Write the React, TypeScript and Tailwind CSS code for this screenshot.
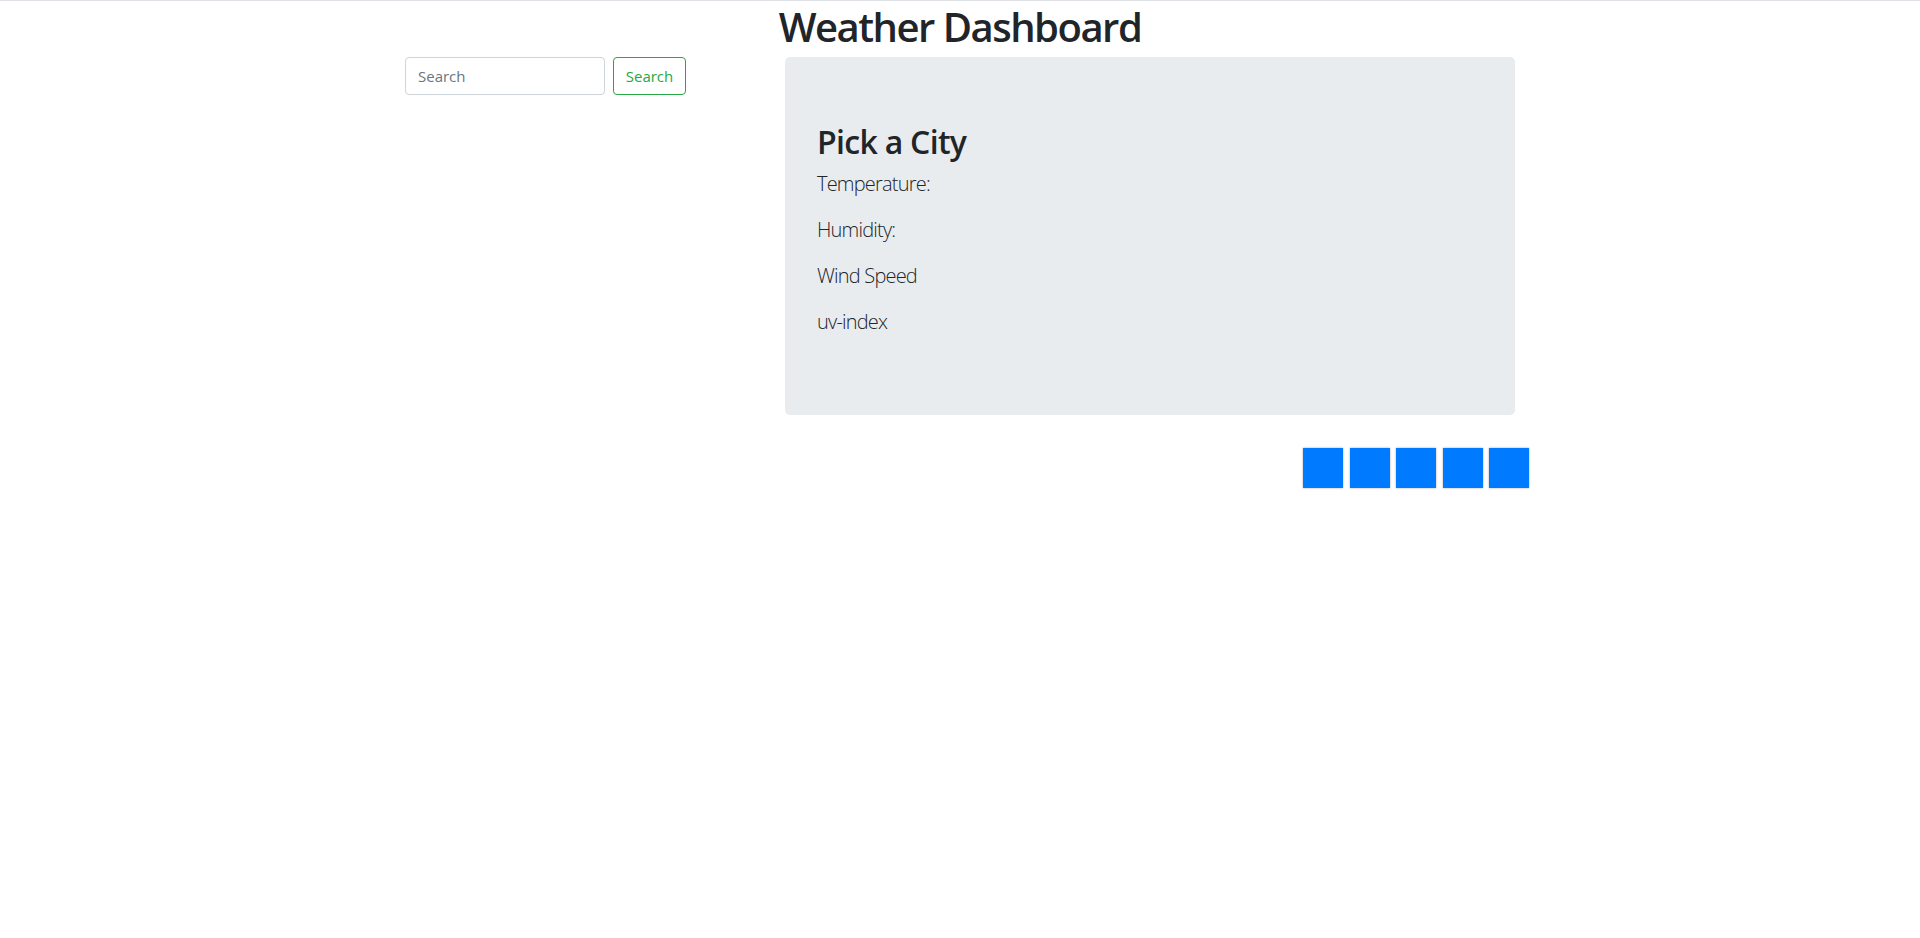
import React from 'react';

const days = [0, 1, 2, 3, 4];

const App = () => {
  return (
    <div
      className="min-h-screen w-full bg-white border-t border-[#dee2e6] text-[#212529]"
      style={{ fontFamily: '"Open Sans", "Noto Sans", sans-serif' }}
    >
      {/* Header */}
      <h1 className="text-center text-[40px] leading-[48px] font-semibold pt-[2px] mb-[6px] tracking-[-1.5px]">Weather Dashboard</h1>

      <div className="w-[1140px] mx-auto flex">
        {/* Search column */}
        <div className="w-[380px] px-[15px]">
          <form className="flex items-center gap-2" onSubmit={(e) => e.preventDefault()}>
            <input
              type="text"
              placeholder="Search"
              className="w-[200px] h-[38px] px-3 text-[15px] border border-[#ced4da] rounded-[4px] bg-white placeholder:text-[#6c757d] outline-none"
            />
            <button
              type="submit"
              className="h-[38px] w-[73px] text-[15px] text-[#28a745] border border-[#28a745] rounded-[4px] bg-white"
            >
              Search
            </button>
          </form>
        </div>

        {/* Current weather */}
        <div className="w-[760px] px-[15px]">
          <div className="bg-[#e9ecef] rounded-[5px] px-8 pt-[66px] pb-[62px]">
            <h2 className="text-[32px] leading-[38px] font-semibold mb-2 tracking-[-0.7px]">Pick a City</h2>
            <p className="text-[20px] leading-[30px] font-light mb-4 tracking-[-0.8px]">Temperature:</p>
            <p className="text-[20px] leading-[30px] font-light mb-4 tracking-[-0.8px]">Humidity:</p>
            <p className="text-[20px] leading-[30px] font-light mb-4 tracking-[-0.8px]">Wind Speed</p>
            <p className="text-[20px] leading-[30px] font-light mb-4 tracking-[-0.8px]">uv-index</p>
          </div>

          {/* Forecast */}
          <div className="flex justify-end gap-[6.5px] mt-[33px] -mr-[14px]">
            {days.map((d) => (
              <div key={d} className="w-10 h-10 bg-[#007bff] shadow-[0_0_2px_rgba(0,0,0,0.35)]" />
            ))}
          </div>
        </div>
      </div>
    </div>
  );
};

export default App;
